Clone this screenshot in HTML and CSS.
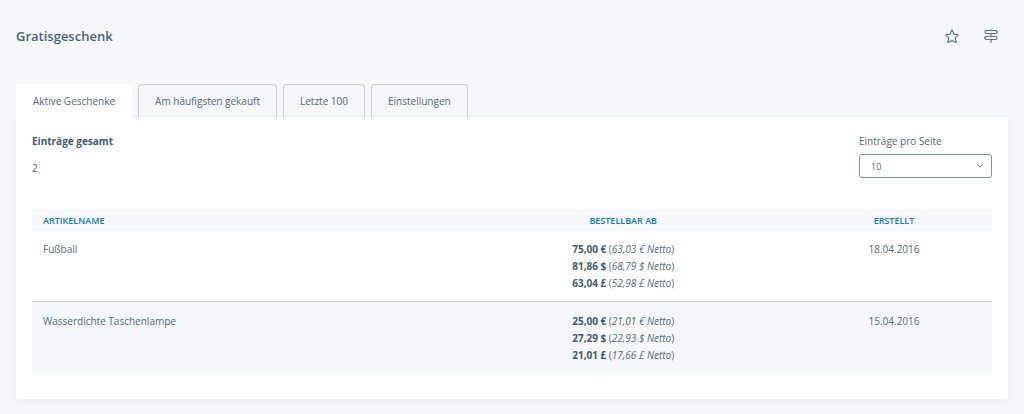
FILE: index.html
```html
<!DOCTYPE html>
<html lang="de">
<head>
    <meta charset="UTF-8">
    <meta name="viewport" content="width=device-width, initial-scale=1.0">
    <title>Gratisgeschenk</title>
    <link rel="stylesheet" href="styles.css">
</head>
<body>

    <header class="page-header">
        <h1>Gratisgeschenk</h1>
        <div class="header-actions">
            <button type="button" class="icon-button" aria-label="Favorit">
                <svg width="16" height="16" viewBox="0 -1 16 16">
                    <path d="M8 .8l2 4.3 4.6.6-3.4 3.2.9 4.7L8 11.4l-4.1 2.2.9-4.7L1.4 5.7 6 5.1z"/>
                </svg>
            </button>
            <button type="button" class="icon-button" aria-label="Wegweiser">
                <svg width="16" height="16" viewBox="0 -1 16 16">
                    <path d="M8 .3v1.2M8 4.5v3M8 10.5v3.3M3 1.5h10l1.4 1.5L13 4.5H3q-.9 0-.9-.9V2.4q0-.9.9-.9zM13 7.5H3L1.6 9 3 10.5h10q.9 0 .9-.9V8.4q0-.9-.9-.9z"/>
                </svg>
            </button>
        </div>
    </header>

    <nav class="tabs">
        <a href="#aktive" class="tab active">Aktive Geschenke</a>
        <a href="#haeufig" class="tab">Am häufigsten gekauft</a>
        <a href="#letzte" class="tab">Letzte 100</a>
        <a href="#einstellungen" class="tab">Einstellungen</a>
    </nav>

    <main class="panel">
        <div class="toolbar">
            <div class="total">
                <strong>Einträge gesamt</strong>
                <span>2</span>
            </div>
            <div class="per-page">
                <label for="perPage">Einträge pro Seite</label>
                <div class="select">
                    <select id="perPage">
                        <option>10</option>
                        <option>20</option>
                        <option>50</option>
                        <option>100</option>
                    </select>
                    <svg width="8" height="8" viewBox="0 0 8 8">
                        <path d="M1 2.5l3 2.5 3-2.5"/>
                    </svg>
                </div>
            </div>
        </div>

        <table class="gifts">
            <thead>
                <tr>
                    <th class="col-name">Artikelname</th>
                    <th class="col-price">Bestellbar ab</th>
                    <th class="col-date">Erstellt</th>
                </tr>
            </thead>
            <tbody>
                <tr>
                    <td class="col-name">Fußball</td>
                    <td class="col-price">
                        <strong>75,00 €</strong> (<em>63,03 € Netto</em>)<br>
                        <strong>81,86 $</strong> (<em>68,79 $ Netto</em>)<br>
                        <strong>63,04 £</strong> (<em>52,98 £ Netto</em>)
                    </td>
                    <td class="col-date">18.04.2016</td>
                </tr>
                <tr>
                    <td class="col-name">Wasserdichte Taschenlampe</td>
                    <td class="col-price">
                        <strong>25,00 €</strong> (<em>21,01 € Netto</em>)<br>
                        <strong>27,29 $</strong> (<em>22,93 $ Netto</em>)<br>
                        <strong>21,01 £</strong> (<em>17,66 £ Netto</em>)
                    </td>
                    <td class="col-date">15.04.2016</td>
                </tr>
            </tbody>
        </table>
    </main>

</body>
</html>
```

FILE: styles.css
```css
* {
    box-sizing: border-box;
}

body {
    margin: 0;
    padding: 24px 16px 14px;
    background-color: #f5f7fa;
    color: #526a7b;
    font-family: "Open Sans", "Noto Sans", sans-serif;
    font-size: 10px;
    line-height: 17px;
}

.page-header {
    display: flex;
    justify-content: space-between;
    align-items: center;
    height: 24px;
    margin-bottom: 36px;
}

.page-header h1 {
    margin: 0;
    color: #4a6375;
    font-size: 13px;
    font-weight: 600;
}

.header-actions {
    display: flex;
    gap: 23px;
    padding-right: 9px;
}

.icon-button {
    display: flex;
    padding: 0;
    border: none;
    background: none;
    cursor: pointer;
}

.icon-button svg {
    fill: none;
    stroke: #5b7688;
    stroke-width: 1.1;
    stroke-linejoin: round;
}

.tabs {
    display: flex;
    gap: 6px;
}

.tab {
    padding: 8px 16px 7px;
    border: 1px solid #c9cdd2;
    border-bottom: none;
    border-radius: 3px 3px 0 0;
    color: inherit;
    text-decoration: none;
}

.tab.active {
    border-color: #fff;
    background-color: #fff;
}

.panel {
    padding: 16px 16px 26px;
    background-color: #fff;
    box-shadow: 0 2px 6px rgba(80, 100, 130, 0.08);
}

.toolbar {
    display: flex;
    justify-content: space-between;
    margin-bottom: 32px;
}

.total {
    display: flex;
    flex-direction: column;
    gap: 10px;
}

strong {
    color: #435a6b;
    font-weight: 700;
}

.per-page {
    display: flex;
    flex-direction: column;
    gap: 4px;
    width: 133px;
}

.select {
    display: grid;
    align-items: center;
}

.select select,
.select svg {
    grid-area: 1 / 1;
}

.select select {
    width: 100%;
    height: 24px;
    padding: 0 11px;
    border: 1px solid #7d92a1;
    border-radius: 3px;
    background-color: #fff;
    color: inherit;
    font-family: inherit;
    font-size: 9px;
    appearance: none;
}

.select svg {
    justify-self: end;
    margin-right: 8px;
    fill: none;
    stroke: #5b7083;
    pointer-events: none;
}

.gifts {
    width: 100%;
    border-collapse: separate;
    border-spacing: 0;
    table-layout: fixed;
}

.gifts th {
    height: 20px;
    padding: 0 11px;
    background-color: #f5f7fa;
    color: #2079b0;
    font-size: 9px;
    font-weight: 600;
    text-transform: uppercase;
}

.gifts td {
    padding: 11px 11px 9px;
    vertical-align: top;
}

.gifts tbody tr + tr td {
    border-top: 1px solid #c9cdd2;
    background-color: #f5f7fa;
}

.gifts .col-name {
    text-align: left;
}

.gifts .col-price {
    width: 36%;
    text-align: center;
}

.gifts .col-date {
    width: 196px;
    text-align: center;
}
```
